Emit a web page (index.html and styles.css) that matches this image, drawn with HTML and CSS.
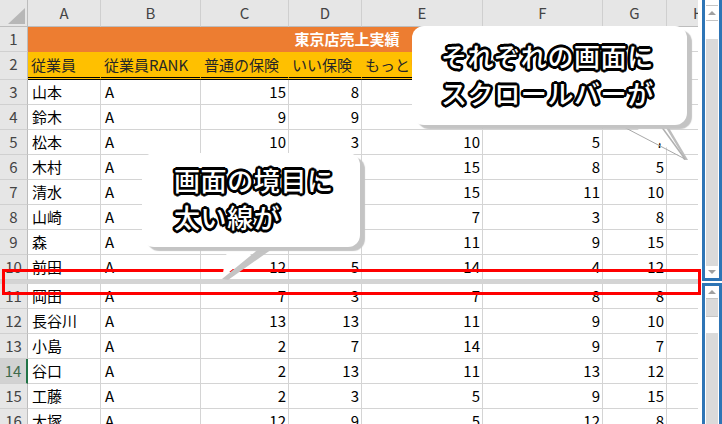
FILE: index.html
```html
<!DOCTYPE html>
<html lang="ja">
<head>
<meta charset="utf-8">
<link rel="stylesheet" href="styles.css">
</head>
<body>
<div class="app">
  <div class="sheet">
    <div class="pane pane-top">
      <div class="row row-hdr">
        <div class="c rh corner"><span class="tri"></span></div>
        <div class="c ch">A</div><div class="c ch">B</div><div class="c ch">C</div><div class="c ch">D</div>
        <div class="c ch">E</div><div class="c ch">F</div><div class="c ch">G</div><div class="c ch">H</div>
      </div>
      <div class="row">
        <div class="c rh">1</div>
        <div class="c title">東京店売上実績</div>
        <div class="c"></div>
      </div>
      <div class="row row-2">
        <div class="c rh">2</div>
        <div class="c yl">従業員</div><div class="c yl">従業員RANK</div><div class="c yl">普通の保険</div><div class="c yl">いい保険</div>
        <div class="c yl">もっといい保険</div><div class="c yl"></div><div class="c yl"></div><div class="c"></div>
      </div>
      <div class="row"><div class="c rh">3</div><div class="c">山本</div><div class="c">A</div><div class="c n">15</div><div class="c n">8</div><div class="c n"></div><div class="c n"></div><div class="c n"></div><div class="c"></div></div>
      <div class="row"><div class="c rh">4</div><div class="c">鈴木</div><div class="c">A</div><div class="c n">9</div><div class="c n">9</div><div class="c n"></div><div class="c n"></div><div class="c n"></div><div class="c"></div></div>
      <div class="row"><div class="c rh">5</div><div class="c">松本</div><div class="c">A</div><div class="c n">10</div><div class="c n">3</div><div class="c n">10</div><div class="c n">5</div><div class="c n">7</div><div class="c"></div></div>
      <div class="row"><div class="c rh">6</div><div class="c">木村</div><div class="c">A</div><div class="c n"></div><div class="c n"></div><div class="c n">15</div><div class="c n">8</div><div class="c n">5</div><div class="c"></div></div>
      <div class="row"><div class="c rh">7</div><div class="c">清水</div><div class="c">A</div><div class="c n"></div><div class="c n"></div><div class="c n">15</div><div class="c n">11</div><div class="c n">10</div><div class="c"></div></div>
      <div class="row"><div class="c rh">8</div><div class="c">山崎</div><div class="c">A</div><div class="c n"></div><div class="c n"></div><div class="c n">7</div><div class="c n">3</div><div class="c n">8</div><div class="c"></div></div>
      <div class="row"><div class="c rh">9</div><div class="c">森</div><div class="c">A</div><div class="c n"></div><div class="c n">3</div><div class="c n">11</div><div class="c n">9</div><div class="c n">15</div><div class="c"></div></div>
      <div class="row"><div class="c rh">10</div><div class="c">前田</div><div class="c">A</div><div class="c n">12</div><div class="c n">5</div><div class="c n">14</div><div class="c n">4</div><div class="c n">12</div><div class="c"></div></div>
    </div>
    <div class="splitbar"></div>
    <div class="pane pane-bottom">
      <div class="row"><div class="c rh">11</div><div class="c">岡田</div><div class="c">A</div><div class="c n">7</div><div class="c n">3</div><div class="c n">7</div><div class="c n">8</div><div class="c n">8</div><div class="c"></div></div>
      <div class="row"><div class="c rh">12</div><div class="c">長谷川</div><div class="c">A</div><div class="c n">13</div><div class="c n">13</div><div class="c n">11</div><div class="c n">9</div><div class="c n">10</div><div class="c"></div></div>
      <div class="row"><div class="c rh">13</div><div class="c">小島</div><div class="c">A</div><div class="c n">2</div><div class="c n">7</div><div class="c n">14</div><div class="c n">9</div><div class="c n">7</div><div class="c"></div></div>
      <div class="row"><div class="c rh sel">14</div><div class="c">谷口</div><div class="c">A</div><div class="c n">2</div><div class="c n">13</div><div class="c n">11</div><div class="c n">13</div><div class="c n">12</div><div class="c"></div></div>
      <div class="row"><div class="c rh">15</div><div class="c">工藤</div><div class="c">A</div><div class="c n">2</div><div class="c n">3</div><div class="c n">5</div><div class="c n">9</div><div class="c n">15</div><div class="c"></div></div>
      <div class="row"><div class="c rh">16</div><div class="c">大塚</div><div class="c">A</div><div class="c n">12</div><div class="c n">9</div><div class="c n">5</div><div class="c n">12</div><div class="c n">8</div><div class="c"></div></div>
    </div>
  </div>
  <div class="vscroll">
    <div class="sb sb-top">
      <div class="sb-pad"></div>
      <div class="sb-line"></div>
      <div class="sb-btn"><span class="arr-up"></span></div>
      <div class="sb-line"></div>
      <div class="sb-gap"></div>
      <div class="sb-thumb sb-thumb-long"></div>
      <div class="sb-btn sb-btn-down"><span class="arr-down"></span></div>
    </div>
    <div class="sb sb-bottom">
      <div class="sb-btn sb-btn-up2"><span class="arr-up"></span></div>
      <div class="sb-line"></div>
      <div class="sb-thumb sb-thumb-short"></div>
      <div class="sb-line"></div>
      <div class="sb-gap sb-gap2"></div>
      <div class="sb-thumb sb-thumb-rest"></div>
    </div>
  </div>
</div>

<div class="redbox"></div>

<svg class="tails" width="722" height="424" viewBox="0 0 722 424">
  <polygon points="660,121 665,121 688,160 684,160" fill="#bdbdbd"/>
  <polygon points="620,118 660,118 685,159" fill="#ffffff"/>
  <line x1="620" y1="125" x2="685" y2="159" stroke="#a8a8a8" stroke-width="1"/>
  <line x1="661" y1="126" x2="685" y2="159" stroke="#b0b0b0" stroke-width="1.5"/>
  <polygon points="266,243 275,247 228,280 222,279" fill="#c4c4c4"/>
  <polygon points="229,240 268,240 222,278" fill="#ffffff"/>
</svg>

<div class="callout callout-1">
  <div class="callout-text">それぞれの画面に<br>スクロールバーが</div>
</div>
<div class="callout callout-2">
  <div class="callout-text">画面の境目に<br>太い線が</div>
</div>
</body>
</html>
```
FILE: styles.css
```css
html, body {
  margin: 0;
  padding: 0;
}
body {
  width: 722px;
  height: 424px;
  overflow: hidden;
  position: relative;
  background: #fff;
  font-family: "Noto Sans CJK JP", "Noto Sans", sans-serif;
}
.app {
  display: flex;
  height: 424px;
}
.sheet {
  width: 698px;
  flex: none;
  display: flex;
  flex-direction: column;
  overflow: hidden;
}
.pane {
  overflow: hidden;
  flex: none;
}
.pane-top {
  height: 280px;
}
.splitbar {
  height: 4px;
  background: #d4d4d4;
  flex: none;
}
.pane-bottom {
  flex: 1;
}
.row {
  display: grid;
  grid-template-columns: 28px 73px 100px 88px 73px 121px 120px 64px 64px;
  height: 25px;
  width: max-content;
}
.c {
  box-sizing: border-box;
  border-right: 1px solid #d4d4d4;
  border-bottom: 1px solid #d4d4d4;
  font-size: 15px;
  line-height: 24px;
  padding: 0 4px;
  white-space: nowrap;
  overflow: hidden;
  color: #000;
}
.n {
  text-align: right;
  padding-right: 2px;
}
.rh {
  background: #e6e6e6;
  border-right-color: #bcbcbc;
  border-bottom-color: #d0d0d0;
  text-align: center;
  color: #444;
  padding: 0;
}
.rh.sel {
  background: #d2d2d2;
  color: #3f6a4c;
  border-right: 2px solid #217346;
}
.row-hdr {
  height: 27px;
}
.ch {
  background: #e6e6e6;
  border-right-color: #cfcfcf;
  border-bottom-color: #bdbdbd;
  text-align: center;
  color: #444;
  line-height: 26px;
  padding: 0;
}
.corner {
  position: relative;
  border-bottom-color: #bdbdbd;
}
.tri {
  position: absolute;
  left: 8px;
  top: 8px;
  width: 17px;
  height: 16px;
  background: #b7b7b7;
  clip-path: polygon(100% 0, 100% 100%, 0 100%);
}
.title {
  grid-column: span 7;
  background: #ed7d31;
  border-color: #ed7d31;
  color: #fff;
  font-weight: 700;
  text-align: center;
}
.row-2 {
  height: 28px;
}
.yl {
  background: #ffc000;
  border-right-color: #ffc000;
  border-bottom: 3px double #000;
  color: #262626;
  line-height: 25px;
  padding-left: 3px;
}
.vscroll {
  width: 24px;
  flex: none;
  box-sizing: border-box;
  padding-left: 4px;
  display: flex;
  flex-direction: column;
  gap: 2px;
}
.sb {
  box-sizing: border-box;
  border: 3px solid #2e75b6;
  background: #fff;
  display: flex;
  flex-direction: column;
  flex: none;
  overflow: hidden;
}
.sb-top {
  height: 284px;
  margin-top: -3px;
}
.sb-bottom {
  height: 150px;
}
.sb-pad {
  height: 5px;
  flex: none;
}
.sb-line {
  height: 1px;
  margin: 0 1px;
  background: #c4c4c4;
  flex: none;
}
.sb-btn {
  height: 14px;
  flex: none;
  display: flex;
  align-items: center;
  justify-content: center;
}
.sb-btn-down {
  height: 12px;
}
.sb-btn-up2 {
  height: 12px;
}
.arr-up {
  width: 0;
  height: 0;
  border-left: 4px solid transparent;
  border-right: 4px solid transparent;
  border-bottom: 4px solid #a0a0a0;
}
.arr-down {
  width: 0;
  height: 0;
  border-left: 4px solid transparent;
  border-right: 4px solid transparent;
  border-top: 4px solid #a0a0a0;
}
.sb-gap {
  height: 18px;
  flex: none;
}
.sb-gap2 {
  height: 16px;
}
.sb-thumb {
  background: #dadada;
  margin: 0 1px;
  flex: none;
}
.sb-thumb-long {
  height: 227px;
}
.sb-thumb-short {
  height: 17px;
}
.sb-thumb-rest {
  flex: 1;
}
.redbox {
  position: absolute;
  left: 2px;
  top: 269px;
  width: 699px;
  height: 26px;
  box-sizing: border-box;
  border: 3px solid #ff0000;
}
.tails {
  position: absolute;
  left: 0;
  top: 0;
}
.callout {
  position: absolute;
  background: #fff;
  border-radius: 12px;
  box-shadow: 5px 4px 1px #c4c4c4;
  box-sizing: border-box;
}
.callout-1 {
  left: 412px;
  top: 26px;
  width: 275px;
  height: 99px;
  padding: 11px 0 0 29px;
}
.callout-2 {
  left: 142px;
  top: 153px;
  width: 218px;
  height: 94px;
  padding: 8px 0 0 32px;
}
.callout-text {
  color: #fff;
  font-weight: 500;
  font-size: 26px;
  line-height: 37px;
  letter-spacing: 0.6px;
  white-space: nowrap;
  text-shadow:
    2.6px 0 0 #000, -2.6px 0 0 #000, 0 2.6px 0 #000, 0 -2.6px 0 #000,
    1.8px 1.8px 0 #000, -1.8px 1.8px 0 #000, 1.8px -1.8px 0 #000, -1.8px -1.8px 0 #000,
    2.4px 1px 0 #000, -2.4px 1px 0 #000, 2.4px -1px 0 #000, -2.4px -1px 0 #000,
    1px 2.4px 0 #000, -1px 2.4px 0 #000, 1px -2.4px 0 #000, -1px -2.4px 0 #000,
    0 0 3px rgba(0,0,0,0.4);
}
```
